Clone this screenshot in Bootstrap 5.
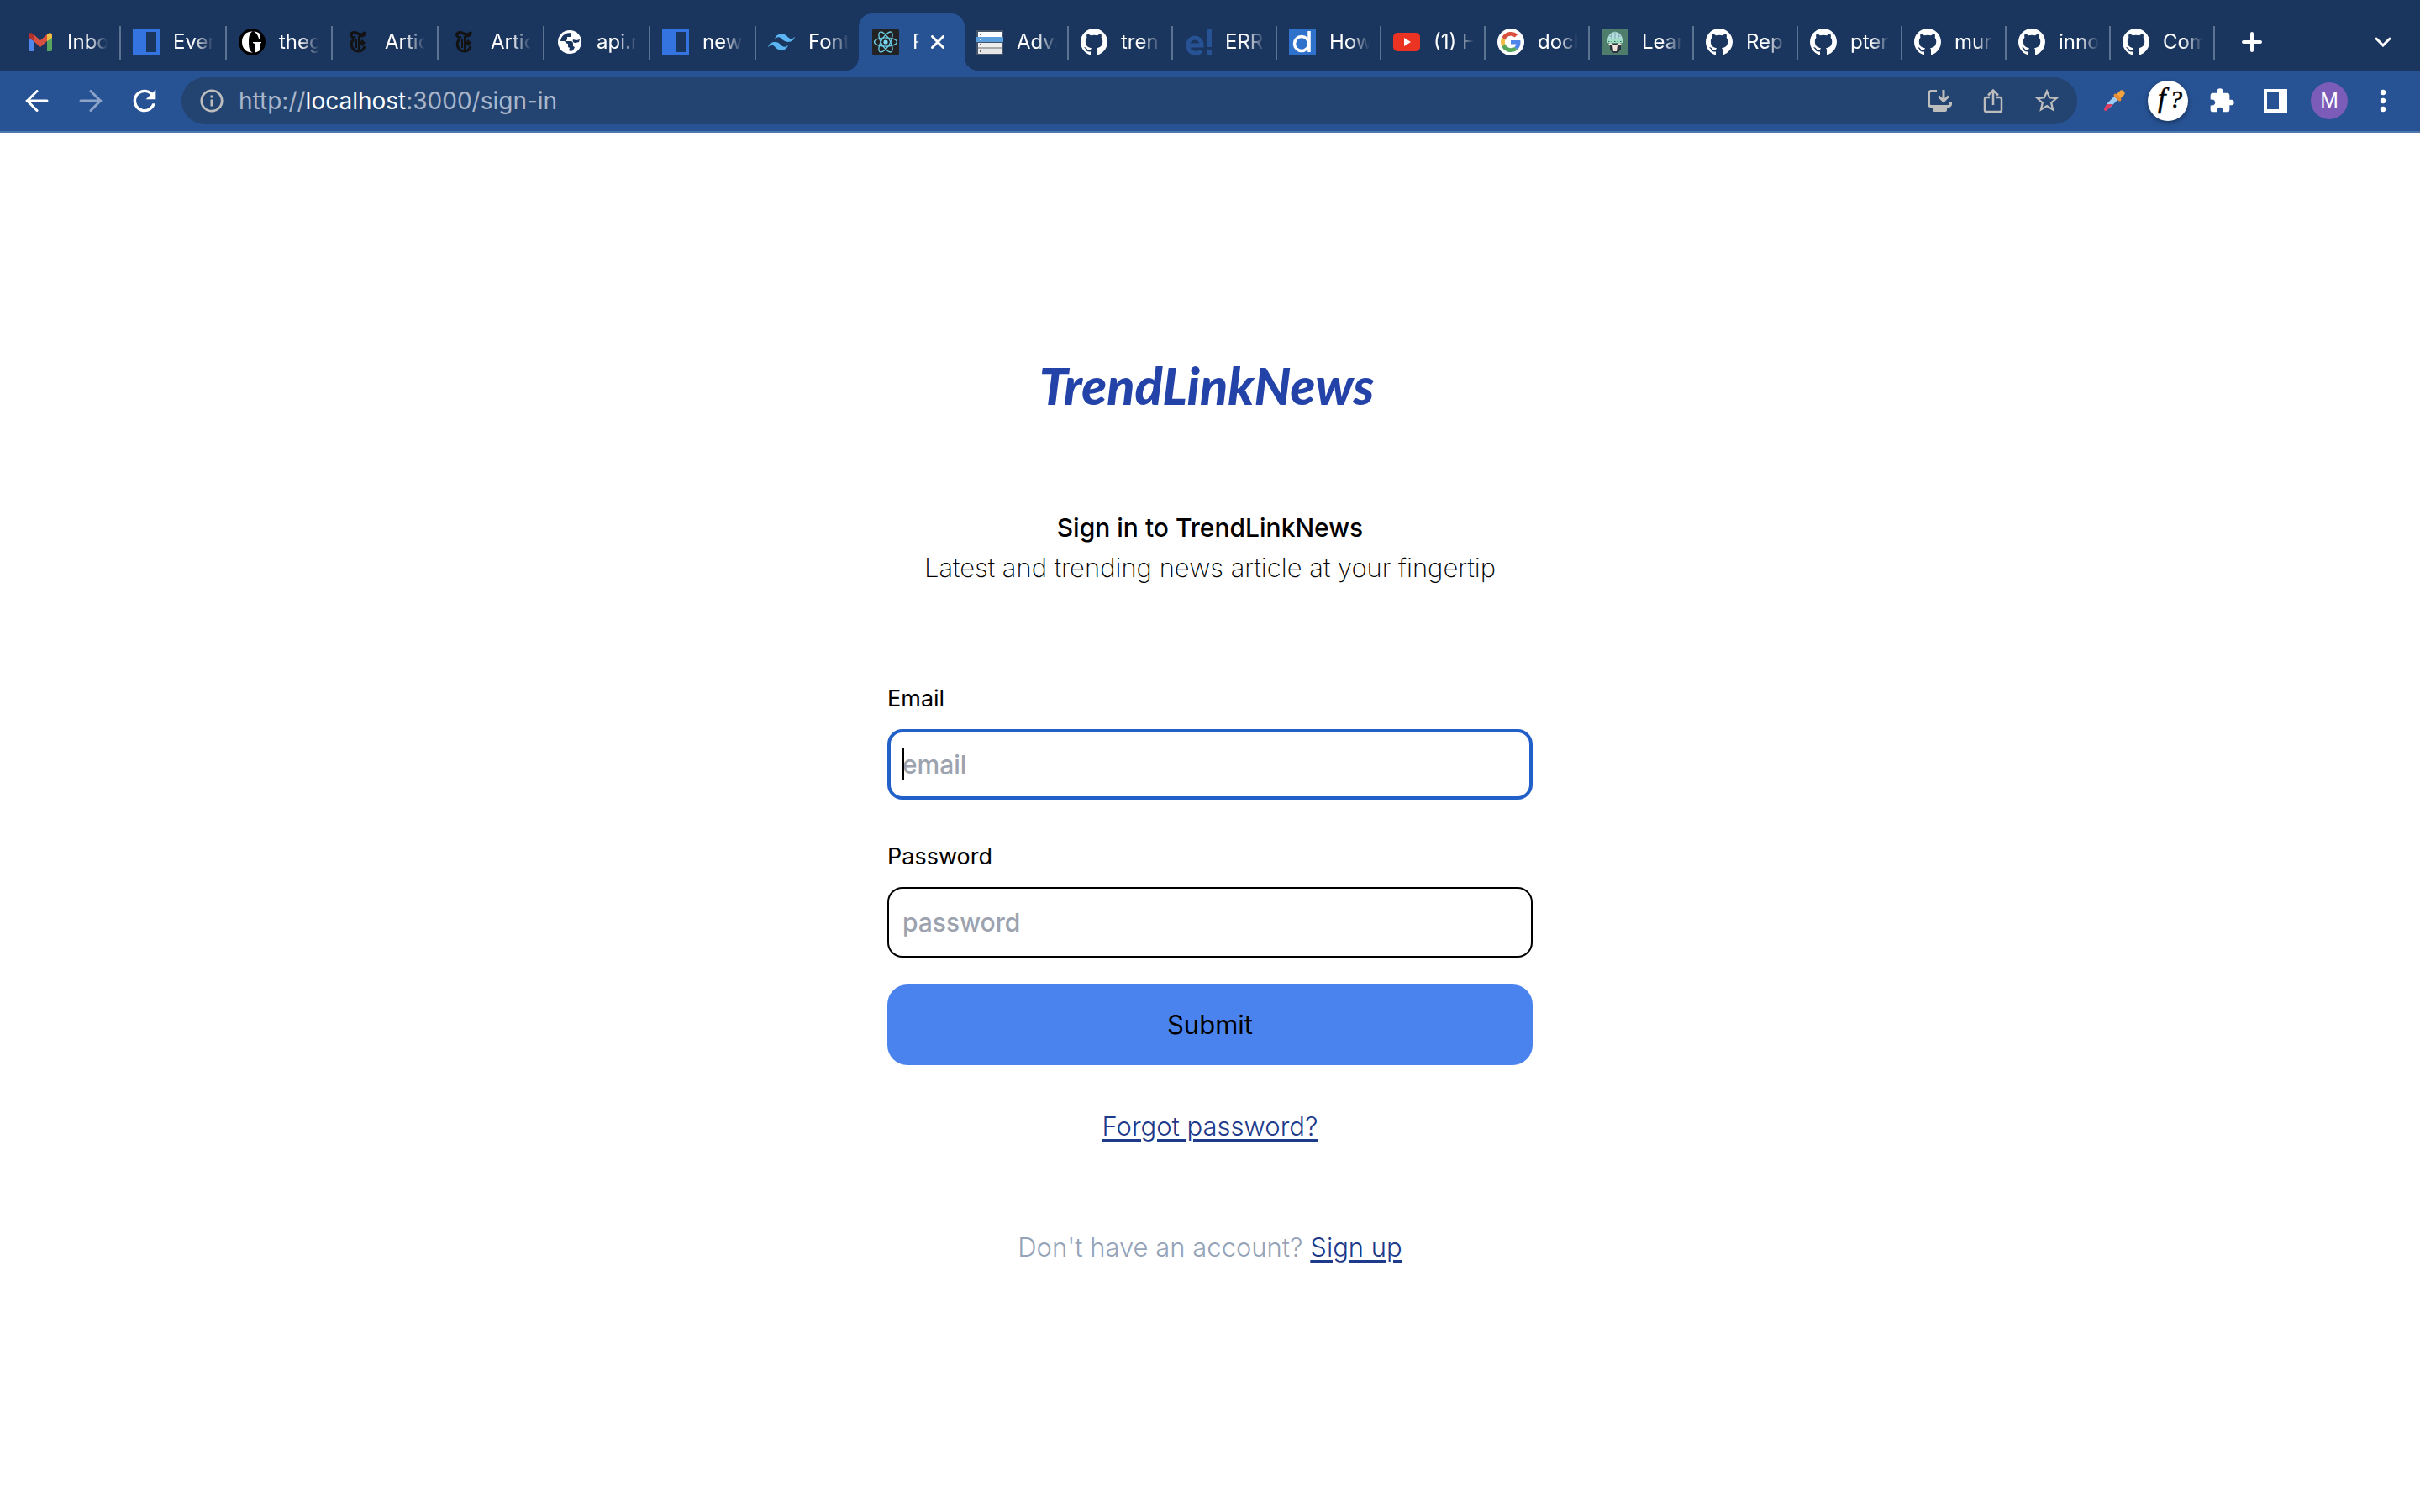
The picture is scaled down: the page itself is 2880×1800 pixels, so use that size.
<!DOCTYPE html>
<html lang="en">
<head>
<meta charset="utf-8">
<meta name="viewport" content="width=device-width, initial-scale=1">
<title>Sign in to TrendLinkNews</title>
<link href="https://cdn.jsdelivr.net/npm/bootstrap@5.3.0/dist/css/bootstrap.min.css" rel="stylesheet">
<style>
  body { font-family: Inter, "Liberation Sans", sans-serif; font-size: 31px; line-height: 48px; color: #000; background: #fff; }
  svg { display: block; flex: none; }

  /* tab strip */
  .tabstrip { background: #1a355e; height: 84px; padding: 16px 12px 0 18px; }
  .tab-item { flex: 0 0 124px; height: 68px; padding-left: 14px; gap: 16px; position: relative; }
  .tab-wide { flex-basis: 126px; }
  .tab-before { flex-basis: 122px; }
  .tab-line::after { content: ""; position: absolute; right: 0; top: 15px; width: 2px; height: 40px; background: #5b7290; }
  .tab-item a { gap: 16px; color: #fff; font-size: 24px; line-height: 32px; }
  .tab-label { width: 48px; overflow: hidden; white-space: nowrap; -webkit-mask-image: linear-gradient(90deg, #000 50%, transparent); mask-image: linear-gradient(90deg, #000 50%, transparent); }
  .tab-current { flex-basis: 126px; padding-left: 16px; gap: 14px; background: #275395; border-radius: 16px 16px 0 0; }
  .tab-current::before, .tab-current::after { content: ""; position: absolute; bottom: 0; width: 16px; height: 16px; }
  .tab-current::before { left: -16px; background: radial-gradient(circle at 0 0, transparent 16px, #275395 16px); }
  .tab-current::after { right: -16px; background: radial-gradient(circle at 100% 0, transparent 16px, #275395 16px); }
  .tab-current .tab-label { width: 8px; }
  .bare { border: 0; background: none; padding: 0; color: #fff; }
  .slot { flex: 0 0 64px; width: 64px; height: 64px; display: flex; align-items: center; justify-content: center; text-decoration: none; }
  .strip-slot { height: 68px; }
  .plus-slot { margin-left: 12px; }

  /* address bar */
  .toolbar { background: #275395; height: 74px; border-bottom: 2px solid #4f78ae; padding: 0 12px; gap: 12px; }
  .urlbar { background: #234370; height: 56px; border-radius: 28px; padding: 0 4px; color: #a9b6ca; font-size: 28px; line-height: 40px; }
  .urlbar b { color: #fff; font-weight: 400; }
  .muted-icon { color: #bdbdbd; }
  .fontq { width: 48px; height: 48px; background: #fff; box-shadow: 0 2px 6px #0006; }
  .face { width: 44px; height: 44px; background: #7b5cb8; font-size: 24px; line-height: 44px; }

  /* sign-in page */
  .signin { padding: 256px 16px 96px; }
  .signin-inner { width: 100%; max-width: 768px; }
  .brand { font-family: Lato, sans-serif; font-weight: 900; font-style: italic; font-size: 61px; line-height: 90px; color: #2443a8; margin-bottom: 100px; padding-right: 8px; }
  .signin h1 { font-size: 30px; line-height: 48px; font-weight: 500; }
  .tagline { font-weight: 200; margin-bottom: 112px; }
  .signin label { font-size: 27px; line-height: 40px; margin-bottom: 16px; }
  .field { height: 84px; border: 2px solid #000; border-radius: 18px; padding: 0 16px; font-size: 30px; font-weight: 500; color: #000; }
  .field::placeholder { color: #9ca3af; opacity: 1; }
  .field:focus { border-color: #000; box-shadow: none; }
  .field-active, .field-active:focus { border: 4px solid #2160c8; padding: 0 14px; caret-color: transparent; }
  .caret-bar { position: absolute; left: 18px; top: 23px; width: 2px; height: 38px; background: #000; }
  .submit { height: 96px; border-radius: 24px; font-size: 31px; background: #4a83ee; color: #000; border: 0; margin: 32px 0 49px; }
  .signin a { color: #1e3a8a; text-underline-offset: 4px; text-decoration-thickness: 3px; }
  .light { font-weight: 300; }
  .signup { color: #94a3b8; margin-top: 96px; }
</style>
<script src="https://cdn.jsdelivr.net/npm/bootstrap@5.3.0/dist/js/bootstrap.bundle.min.js"></script>
</head>
<body>
<svg width="0" height="0" class="position-absolute" aria-hidden="true">
  <symbol id="github" viewBox="0 0 16 16"><path fill="#fff" d="M8 0C3.58 0 0 3.58 0 8c0 3.54 2.29 6.53 5.47 7.59.4.07.55-.17.55-.38 0-.19-.01-.82-.01-1.49-2.01.37-2.53-.49-2.69-.94-.09-.23-.48-.94-.82-1.13-.28-.15-.68-.52-.01-.53.63-.01 1.08.58 1.23.82.72 1.21 1.87.87 2.33.66.07-.52.28-.87.51-1.07-1.78-.2-3.64-.89-3.64-3.95 0-.87.31-1.59.82-2.15-.08-.2-.36-1.02.08-2.12 0 0 .67-.21 2.2.82.64-.18 1.32-.27 2-.27.68 0 1.36.09 2 .27 1.53-1.04 2.2-.82 2.2-.82.44 1.1.16 1.92.08 2.12.51.56.82 1.27.82 2.15 0 3.07-1.87 3.75-3.65 3.95.29.25.54.73.54 1.48 0 1.07-.01 1.93-.01 2.2 0 .21.15.46.55.38A8.012 8.012 0 0 0 16 8c0-4.42-3.58-8-8-8z"/></symbol>
  <symbol id="times" viewBox="0 0 32 32"><g fill="none" stroke="#121212"><path stroke-width="3.500" d="M8 9c-1-5 4-5 8-3s7 1 8-2"/><path stroke-width="2.500" d="M8 8c0 3 3 3 5 2M24 4c1 5-3 6-7 5"/><path stroke-width="3" d="M11 13c-5 4-3 14 6 14 4 0 6-3 7-6"/><path stroke-width="2" d="M17 9v16M14 13v10"/></g><path fill="#121212" d="M21 13l4 4-4 4-3-4z"/></symbol>
  <symbol id="panel" viewBox="0 0 32 32"><path fill="#3474e0" fill-rule="evenodd" d="M0 0h32v32H0zM16 4v24h12V4z"/></symbol>
</svg>

<header>
  <ul class="tabstrip list-unstyled d-flex mb-0">
    <li class="tab-item tab-wide tab-line d-flex align-items-center"><a href="#" class="d-flex align-items-center text-decoration-none">
      <svg width="32" height="32" viewBox="0 0 32 32"><path fill="#4f86ec" d="M2 9l6 5v13H4a2 2 0 0 1-2-2z"/><path fill="#58a65c" d="M30 9l-6 5v13h4a2 2 0 0 0 2-2z"/><path fill="#d85140" d="M8 7l8 7 8-7v8l-8 7-8-7z"/><path fill="#b3312c" d="M2 11V8c0-3 3-4 6-1v8z"/><path fill="#f1bd42" d="M30 11V8c0-3-3-4-6-1v8z"/></svg>
      <span class="tab-label">Inbo</span></a></li>
    <li class="tab-item tab-wide tab-line d-flex align-items-center"><a href="#" class="d-flex align-items-center text-decoration-none"><svg width="32" height="32"><use href="#panel"/></svg><span class="tab-label">Ever</span></a></li>
    <li class="tab-item tab-wide tab-line d-flex align-items-center"><a href="#" class="d-flex align-items-center text-decoration-none">
      <svg width="32" height="32" viewBox="0 0 32 32"><circle cx="16" cy="16" r="16"/><path fill="#fff" d="M17 3.500C9 3 4 8.500 4 16s5 13 13 12.500c-4-1-5-6-5-12.500S13 4.500 17 3.500zM18 3.500c3 .2 5 1 7 2.500v6h-1c-1-4-3-7-6-8.500zM17 16h10v1l-2 1v8c-2 1.500-4 2.300-6 2.500V18l-2-1z"/></svg>
      <span class="tab-label">theg</span></a></li>
    <li class="tab-item tab-wide tab-line d-flex align-items-center"><a href="#" class="d-flex align-items-center text-decoration-none"><svg width="32" height="32"><use href="#times"/></svg><span class="tab-label">Artic</span></a></li>
    <li class="tab-item tab-wide tab-line d-flex align-items-center"><a href="#" class="d-flex align-items-center text-decoration-none"><svg width="32" height="32"><use href="#times"/></svg><span class="tab-label">Artic</span></a></li>
    <li class="tab-item tab-wide tab-line d-flex align-items-center"><a href="#" class="d-flex align-items-center text-decoration-none">
      <svg width="32" height="32" viewBox="0 0 32 32"><circle cx="16" cy="16" r="14" fill="#fff"/><path fill="#1a355e" d="M5 15C6 8 11 5 18 5v3c0 2-1 2-3 2h-2v3l-2 2h6c2 0 3 1 3 3v3l2 1-2 4c-2 1-4 1-5 0l1-3-2-1v-4c-2 0-3-2-4-3zM20 13c-1 3 1 4 3 4l4-1 1-3-4 1z"/></svg>
      <span class="tab-label">api.n</span></a></li>
    <li class="tab-item tab-wide tab-line d-flex align-items-center"><a href="#" class="d-flex align-items-center text-decoration-none"><svg width="32" height="32"><use href="#panel"/></svg><span class="tab-label">new</span></a></li>
    <li class="tab-item tab-before d-flex align-items-center"><a href="#" class="d-flex align-items-center text-decoration-none">
      <svg width="32" height="32" viewBox="0 0 24 24"><path fill="#5ab5f2" d="M12.001 4.800c-3.200 0-5.200 1.600-6 4.800 1.200-1.600 2.600-2.200 4.200-1.800.913.228 1.565.89 2.288 1.624C13.666 10.618 15.027 12 18.001 12c3.200 0 5.200-1.600 6-4.800-1.200 1.600-2.600 2.200-4.200 1.800-.913-.228-1.565-.89-2.288-1.624C16.337 6.182 14.976 4.800 12.001 4.800zm-6 7.200c-3.200 0-5.200 1.600-6 4.800 1.200-1.600 2.600-2.200 4.200-1.800.913.228 1.565.89 2.288 1.624 1.177 1.194 2.538 2.576 5.512 2.576 3.200 0 5.200-1.600 6-4.800-1.200 1.600-2.600 2.200-4.200 1.800-.913-.228-1.565-.89-2.288-1.624C10.337 13.382 8.976 12 6.001 12z"/></svg>
      <span class="tab-label">Font</span></a></li>
    <li class="tab-item tab-current d-flex align-items-center"><a href="#" class="d-flex align-items-center text-decoration-none" aria-current="page">
      <svg width="32" height="32" viewBox="0 0 32 32"><rect width="32" height="32" rx="3" fill="#222"/><circle cx="16" cy="16" r="2.600" fill="#7bdcf5"/><g fill="none" stroke="#6ccde8" stroke-width="1.300"><ellipse cx="16" cy="16" rx="13.500" ry="5.200"/><ellipse cx="16" cy="16" rx="13.500" ry="5.200" transform="rotate(60 16 16)"/><ellipse cx="16" cy="16" rx="13.500" ry="5.200" transform="rotate(120 16 16)"/></g></svg>
      <span class="tab-label">R</span></a>
      <button type="button" class="bare" aria-label="Close tab"><svg width="16" height="16" viewBox="0 0 16 16"><path stroke="#fff" stroke-width="3" stroke-linecap="round" d="M1.500 1.500l13 13m0-13l-13 13"/></svg></button></li>
    <li class="tab-item tab-line d-flex align-items-center"><a href="#" class="d-flex align-items-center text-decoration-none">
      <svg width="32" height="32" viewBox="0 0 32 32"><path fill="#44546b" d="M0 2h32v29H0z"/><path fill="#fff" d="M2 4h28v7H2z"/><path fill="#5b9fdd" d="M0 10h32v6H0z"/><path fill="#eee" d="M2 17h28v5H2z"/><path fill="#aaa" d="M2 22h28v2H2z"/><path fill="#e6e6e6" d="M2 24h28v6H2z"/><path fill="#666" d="M4 6h2v2H4zM4 18h2v2H4zM4 26h2v2H4z"/><path fill="#fff" d="M4 12h2v2H4z"/></svg>
      <span class="tab-label">Adva</span></a></li>
    <li class="tab-item tab-line d-flex align-items-center"><a href="#" class="d-flex align-items-center text-decoration-none"><svg width="32" height="32"><use href="#github"/></svg><span class="tab-label">tren</span></a></li>
    <li class="tab-item tab-line d-flex align-items-center"><a href="#" class="d-flex align-items-center text-decoration-none">
      <svg width="32" height="32" viewBox="0 0 32 32"><g fill="none" stroke="#275395" stroke-width="5"><path d="M3 20h17c0-12-16-12-16 0 0 10 10 11 16 7"/></g><path fill="#275395" d="M26 0h6v22h-6zM26 26h6v6h-6z"/></svg>
      <span class="tab-label">ERR</span></a></li>
    <li class="tab-item tab-line d-flex align-items-center"><a href="#" class="d-flex align-items-center text-decoration-none">
      <svg width="32" height="32" viewBox="0 0 32 32"><path fill="#2f72cc" d="M0 0h32v32H0z"/><g fill="none" stroke="#fff" stroke-width="3.500"><circle cx="15" cy="18" r="8.500"/><path d="M24 3v25"/></g></svg>
      <span class="tab-label">How</span></a></li>
    <li class="tab-item tab-line d-flex align-items-center"><a href="#" class="d-flex align-items-center text-decoration-none">
      <svg width="32" height="32" viewBox="0 0 32 32"><rect y="5" width="32" height="22" rx="5" fill="#ea3323"/><path fill="#fff" d="M13 11l8 5-8 5z"/></svg>
      <span class="tab-label">(1) H</span></a></li>
    <li class="tab-item tab-line d-flex align-items-center"><a href="#" class="d-flex align-items-center text-decoration-none">
      <svg width="32" height="32" viewBox="-8 -8 64 64"><circle cx="24" cy="24" r="32" fill="#fff"/><path fill="#d85140" d="M24 9.500c3.540 0 6.710 1.220 9.210 3.600l6.850-6.850C35.900 2.380 30.470 0 24 0 14.620 0 6.510 5.380 2.560 13.220l7.980 6.190C12.430 13.720 17.740 9.500 24 9.500z"/><path fill="#4f86ec" d="M46.980 24.550c0-1.570-.15-3.090-.38-4.550H24v9.020h12.940c-.58 2.960-2.260 5.480-4.780 7.180l7.730 6c4.510-4.180 7.090-10.360 7.090-17.650z"/><path fill="#f1bd42" d="M10.530 28.590A14.500 14.500 0 0 1 9.770 24c0-1.600.27-3.140.76-4.590l-7.980-6.190A23.900 23.900 0 0 0 0 24c0 3.880.92 7.540 2.560 10.780z"/><path fill="#58a65c" d="M24 48c6.480 0 11.930-2.130 15.890-5.810l-7.730-6c-2.150 1.450-4.920 2.300-8.160 2.300-6.260 0-11.570-4.220-13.470-9.910l-7.980 6.190C6.510 42.620 14.620 48 24 48z"/></svg>
      <span class="tab-label">docl</span></a></li>
    <li class="tab-item tab-line d-flex align-items-center"><a href="#" class="d-flex align-items-center text-decoration-none">
      <svg width="32" height="32" viewBox="0 0 32 32"><path fill="#4f7d6b" d="M0 0h32v32H0z"/><path fill="#2b3340" d="M10 18h13v7l-4 4h-5l-4-4z"/><path fill="#b4dcdc" d="M7 16C6 0 26 0 25 16z"/><path fill="none" stroke="#7ba9ad" d="M16 3v10M12 5v4h-3M20 5v4h3M12 9v4M20 9v4"/><path fill="#9fe0c4" d="M7 13h18v4H7z"/><path stroke="#2b6455" stroke-dasharray="1.500 2" d="M8 15.500h17"/><path fill="#f1e4d8" d="M8 18l3-1 3 2h4l3-2 3 1-2 2h-3l-1 7h-4l-1-7h-3z"/></svg>
      <span class="tab-label">Lear</span></a></li>
    <li class="tab-item tab-line d-flex align-items-center"><a href="#" class="d-flex align-items-center text-decoration-none"><svg width="32" height="32"><use href="#github"/></svg><span class="tab-label">Rep</span></a></li>
    <li class="tab-item tab-line d-flex align-items-center"><a href="#" class="d-flex align-items-center text-decoration-none"><svg width="32" height="32"><use href="#github"/></svg><span class="tab-label">pter</span></a></li>
    <li class="tab-item tab-line d-flex align-items-center"><a href="#" class="d-flex align-items-center text-decoration-none"><svg width="32" height="32"><use href="#github"/></svg><span class="tab-label">mur</span></a></li>
    <li class="tab-item tab-line d-flex align-items-center"><a href="#" class="d-flex align-items-center text-decoration-none"><svg width="32" height="32"><use href="#github"/></svg><span class="tab-label">inno</span></a></li>
    <li class="tab-item tab-line d-flex align-items-center"><a href="#" class="d-flex align-items-center text-decoration-none"><svg width="32" height="32"><use href="#github"/></svg><span class="tab-label">Com</span></a></li>
    <li class="plus-slot"><button type="button" class="bare slot strip-slot" aria-label="New tab"><svg width="24" height="24" viewBox="0 0 24 24"><path stroke="#fff" stroke-width="4" stroke-linecap="round" d="M12 2v20M2 12h20"/></svg></button></li>
    <li class="ms-auto"><button type="button" class="bare slot strip-slot" aria-label="Search tabs"><svg width="20" height="12" viewBox="0 0 20 12"><path fill="none" stroke="#fff" stroke-width="3" stroke-linecap="round" d="M2 2l8 8 8-8"/></svg></button></li>
  </ul>

  <div class="toolbar d-flex align-items-center">
    <div class="d-flex">
      <button type="button" class="bare slot" aria-label="Back"><svg width="28" height="26" viewBox="0 0 28 26"><path fill="none" stroke="#fff" stroke-width="3" stroke-linecap="round" stroke-linejoin="round" d="M26 13H2M14 1.500L2.500 13 14 24.500"/></svg></button>
      <button type="button" class="bare slot" aria-label="Forward"><svg width="28" height="26" viewBox="0 0 28 26"><path fill="none" stroke="#8da3c8" stroke-width="3" stroke-linecap="round" stroke-linejoin="round" d="M2 13h24M14 1.500L25.500 13 14 24.500"/></svg></button>
      <button type="button" class="bare slot" aria-label="Reload"><svg width="40" height="40" viewBox="0 0 24 24"><path fill="#fff" d="M17.650 6.350A7.960 7.960 0 0 0 12 4a8 8 0 1 0 7.730 10h-2.080A6 6 0 1 1 12 6c1.660 0 3.140.69 4.220 1.780L13 11h7V4z"/></svg></button>
    </div>
    <div class="urlbar d-flex align-items-center flex-grow-1">
      <button type="button" class="bare slot muted-icon" aria-label="Site information"><svg width="28" height="28" viewBox="0 0 28 28"><circle cx="14" cy="14" r="12.200" fill="none" stroke="currentColor" stroke-width="2.800"/><path fill="currentColor" d="M12.500 7.500h3v3h-3zM12.500 12.500h3v8h-3z"/></svg></button>
      <span class="flex-grow-1">http://<b>localhost</b>:3000/sign-in</span>
      <button type="button" class="bare slot muted-icon" aria-label="Install app"><svg width="30" height="28" viewBox="0 0 30 28"><path fill="none" stroke="currentColor" stroke-width="3" d="M12 2.500H5A2.500 2.500 0 0 0 2.500 5v13A2.500 2.500 0 0 0 5 20.500h21a2.500 2.500 0 0 0 2.500-2.500v-2M20 1v12M14 8.500l6 6 6-6"/><path fill="currentColor" d="M7 21h17v4a2 2 0 0 1-2 2H9a2 2 0 0 1-2-2z"/></svg></button>
      <button type="button" class="bare slot muted-icon" aria-label="Share"><svg width="24" height="30" viewBox="0 0 24 30"><path fill="none" stroke="currentColor" stroke-width="2.500" d="M8 11H4a2 2 0 0 0-2 2v13a2 2 0 0 0 2 2h16a2 2 0 0 0 2-2V13a2 2 0 0 0-2-2h-4M12 20V3M6 8.500L12 2.500l6 6"/></svg></button>
      <button type="button" class="bare slot muted-icon" aria-label="Bookmark"><svg width="34" height="34" viewBox="0 0 24 24"><path fill="currentColor" d="M22 9.240l-7.190-.62L12 2 9.190 8.630 2 9.240l5.460 4.730L5.820 21 12 17.270 18.180 21l-1.630-7.030L22 9.240zM12 15.400l-3.760 2.270 1-4.280-3.320-2.880 4.380-.38L12 6.100l1.710 4.040 4.380.38-3.320 2.880 1 4.280L12 15.400z"/></svg></button>
    </div>
    <div class="d-flex align-items-center">
      <button type="button" class="bare slot" aria-label="Colour picker"><svg width="28" height="28" viewBox="0 0 28 28"><g stroke-linecap="round"><path stroke="#d93f66" stroke-width="4" d="M4 24l4-5"/><path stroke="#9dcbf5" stroke-width="6" stroke-linecap="butt" d="M7 20L17 10"/><path fill="#d93f66" d="M5 18h8l-5 5-5 3-1-2z"/><path stroke="#f2a33c" stroke-width="7" d="M19 9l4-4"/><path stroke="#e58a35" stroke-width="4" d="M15.500 7.500l5 5"/></g></svg></button>
      <button type="button" class="bare slot" aria-label="Font finder"><span class="fontq rounded-circle d-block"><svg width="48" height="48" viewBox="0 0 48 48"><g font-family="Liberation Serif, serif" font-style="italic" fill="#000"><text x="12" y="32" font-size="34" stroke="#000" stroke-width=".5">f</text><text x="26" y="32" font-size="30" stroke="#000" stroke-width=".5">?</text></g></svg></span></button>
      <button type="button" class="bare slot" aria-label="Extensions"><svg width="32" height="32" viewBox="0 0 24 24"><path fill="#fff" d="M20.500 11H19V7c0-1.100-.9-2-2-2h-4V3.500a2.500 2.500 0 0 0-5 0V5H4c-1.100 0-1.990.9-1.990 2v3.800H3.500c1.490 0 2.700 1.210 2.700 2.700s-1.210 2.700-2.700 2.700H2V20c0 1.100.9 2 2 2h3.800v-1.500c0-1.490 1.210-2.700 2.700-2.700s2.700 1.210 2.700 2.700V22H17c1.100 0 2-.9 2-2v-4h1.500a2.500 2.500 0 0 0 0-5z"/></svg></button>
      <button type="button" class="bare slot" aria-label="Side panel"><svg width="28" height="28" viewBox="0 0 28 28"><path fill="#fff" fill-rule="evenodd" d="M0 0h28v28H0zM4 4v20h14V4z"/></svg></button>
      <button type="button" class="bare slot" aria-label="Profile"><span class="face rounded-circle d-block">M</span></button>
      <button type="button" class="bare slot" aria-label="Menu"><svg width="8" height="28" viewBox="0 0 8 28"><g fill="#fff"><circle cx="4" cy="4" r="3.200"/><circle cx="4" cy="14" r="3.200"/><circle cx="4" cy="24" r="3.200"/></g></svg></button>
    </div>
  </div>
</header>

<main class="signin d-flex justify-content-center">
  <div class="signin-inner text-center">
    <div class="brand">TrendLinkNews</div>
    <h1 class="mb-0">Sign in to TrendLinkNews</h1>
    <p class="tagline">Latest and trending news article at your fingertip</p>
    <form>
      <div class="text-start mb-5">
        <label for="email" class="d-block">Email</label>
        <div class="position-relative">
          <input id="email" type="email" class="form-control field field-active" placeholder="email">
          <span class="caret-bar"></span>
        </div>
      </div>
      <div class="text-start">
        <label for="password" class="d-block">Password</label>
        <input id="password" type="password" class="form-control field" placeholder="password">
      </div>
      <button type="submit" class="btn submit d-block w-100">Submit</button>
    </form>
    <a href="#" class="light d-inline-block">Forgot password?</a>
    <p class="signup light mb-0">Don't have an account? <a href="#">Sign up</a></p>
  </div>
</main>
</body>
</html>
